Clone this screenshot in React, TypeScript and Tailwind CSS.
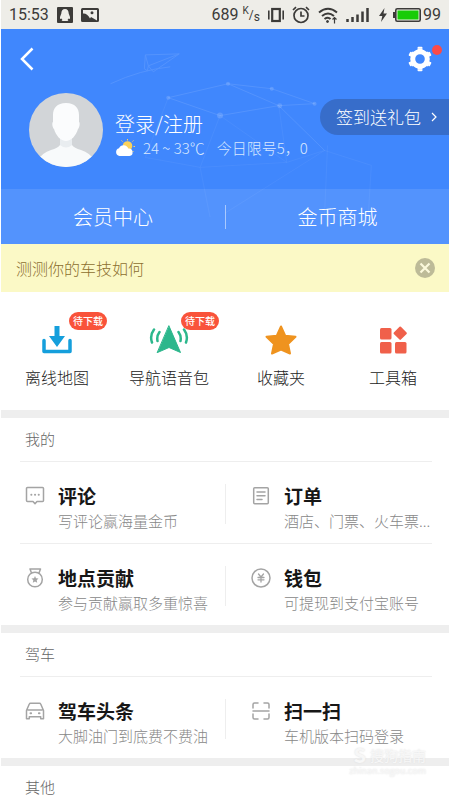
import React from 'react';

const stroke = {
  fill: 'none',
  stroke: 'currentColor',
  strokeWidth: 1.5,
  strokeLinecap: 'round',
  strokeLinejoin: 'round',
} as const;

const CommentIcon = () => (
  <svg viewBox="0 0 20 20" className="w-5 h-5" {...stroke}>
    <path d="M2.500 1.500h15a1 1 0 0 1 1 1v12a1 1 0 0 1-1 1H12l-2 2.300-2-2.300H2.500a1 1 0 0 1-1-1v-12a1 1 0 0 1 1-1z" />
    <path d="M6.300 8.800h.1M10 8.800h.1M13.700 8.800h.1" strokeWidth="2" />
  </svg>
);

const OrderIcon = () => (
  <svg viewBox="0 0 20 20" className="w-5 h-5" {...stroke}>
    <rect x="2.700" y="1.800" width="14.600" height="16" rx="1" />
    <path d="M6 6h8M6 9.700h8M6 13.500h5" />
  </svg>
);

const MedalIcon = () => (
  <svg viewBox="0 0 20 20" className="w-5 h-5" {...stroke}>
    <circle cx="10" cy="11.500" r="7.300" />
    <path d="M6.500 5 5 1h10.500L14 5" />
    <path d="m10 8 1 2.300 2.500.3-1.800 1.700.5 2.500-2.200-1.300-2.200 1.300.5-2.500-1.800-1.700 2.500-.3z" fill="currentColor" strokeWidth="0" />
  </svg>
);

const WalletIcon = () => (
  <svg viewBox="0 0 20 20" className="w-5 h-5" {...stroke}>
    <circle cx="10" cy="10" r="9" />
    <path d="m7.500 6 2.500 3 2.500-3M10 9v5M7 9.500h6M7 11.800h6" strokeWidth="1.300" />
  </svg>
);

const CarIcon = () => (
  <svg viewBox="0 0 20 20" className="w-5 h-5" {...stroke}>
    <path d="M1.500 9.500 4.300 3q.3-.8 1.200-.8h9q.9 0 1.200.8l2.800 6.500v8.300h-2.800v-2H4.300v2H1.500zM3 9h14" />
    <path d="M5.500 12.300h.6M13.900 12.300h.6" strokeWidth="2" />
  </svg>
);

const ScanIcon = () => (
  <svg viewBox="0 0 20 20" className="w-5 h-5" {...stroke}>
    <path d="M2 7V3.500A1.500 1.500 0 0 1 3.500 2H7M13 2h3.500A1.500 1.500 0 0 1 18 3.500V7M18 13v3.500a1.500 1.500 0 0 1-1.500 1.500H13M7 18H3.500A1.500 1.500 0 0 1 2 16.500V13M2 10h16" />
  </svg>
);

const DownloadIcon = () => (
  <svg viewBox="0 0 32 32" className="w-8 h-8" fill="#159fdc">
    <path d="M13.500 2h5v10h5.500l-8 11-8-11h5.500z" />
    <path d="M3 16.500v11h26v-11" fill="none" stroke="#159fdc" strokeWidth="3.500" strokeLinecap="round" strokeLinejoin="round" />
  </svg>
);

const VoiceIcon = () => (
  <svg viewBox="0 0 40 32" className="w-10 h-8" fill="none" stroke="#2cb78c" strokeLinecap="round">
    <path d="M20 2 31.500 28.500 20 23.500l-11.500 5z" fill="#2cb78c" strokeWidth="1" strokeLinejoin="round" />
    <path d="M10.500 8q-3 4-2 9M5 5.500q-4.500 6-2 13M29.500 8q3 4 2 9M35 5.500q4.500 6 2 13" strokeWidth="2.500" />
  </svg>
);

const StarIcon = () => (
  <svg viewBox="0 0 32 32" className="w-8 h-8" fill="#ef931f" stroke="#ef931f" strokeWidth="2" strokeLinejoin="round">
    <path d="m16 2.500 4.300 9.300 10.200 1-7.500 7.200 2 9.500-9-4-9 4 2-9.500-7.500-7.200 10.200-1z" />
  </svg>
);

const ToolsIcon = () => (
  <svg viewBox="0 0 32 32" className="w-8 h-8" fill="#f0604a">
    <rect x="3" y="4" width="11.500" height="11.500" rx="1.500" />
    <rect x="3" y="18" width="11.500" height="11.500" rx="1.500" />
    <rect x="18" y="18" width="11.500" height="11.500" rx="1.500" />
    <rect x="18.200" y="4.200" width="10" height="10" rx="1" transform="rotate(45 23.200 9.200)" />
  </svg>
);

const GearIcon = () => (
  <svg viewBox="0 0 28 28" className="w-7 h-7" fill="none" stroke="currentColor">
    <circle cx="14" cy="14" r="7.300" strokeWidth="5" />
    <path
      d="M14 6V3.500M14 22v2.500M7.100 10 4.900 8.800M20.900 18l2.200 1.200M7.100 18l-2.200 1.200M20.900 10l2.200-1.200"
      strokeWidth="5"
    />
    <path d="M12.500 2.800h3M12.500 25.200h3M3.700 10l1.200-2.200M24.300 10l-1.200-2.200M3.700 18l1.200 2.200M24.300 18l-1.200 2.200" strokeWidth="2" strokeLinecap="round" />
  </svg>
);

interface Shortcut {
  label: string;
  icon: React.FC;
  badge?: string;
}

interface Entry {
  title: string;
  desc: string;
  icon: React.FC;
}

const shortcuts: Shortcut[] = [
  { label: '离线地图', icon: DownloadIcon, badge: '待下载' },
  { label: '导航语音包', icon: VoiceIcon, badge: '待下载' },
  { label: '收藏夹', icon: StarIcon },
  { label: '工具箱', icon: ToolsIcon },
];

const mine: Entry[][] = [
  [
    { title: '评论', desc: '写评论赢海量金币', icon: CommentIcon },
    { title: '订单', desc: '酒店、门票、火车票...', icon: OrderIcon },
  ],
  [
    { title: '地点贡献', desc: '参与贡献赢取多重惊喜', icon: MedalIcon },
    { title: '钱包', desc: '可提现到支付宝账号', icon: WalletIcon },
  ],
];

const driving: Entry[][] = [
  [
    { title: '驾车头条', desc: '大脚油门到底费不费油', icon: CarIcon },
    { title: '扫一扫', desc: '车机版本扫码登录', icon: ScanIcon },
  ],
];

const StatusBar = () => (
  <div className="h-[29px] bg-[#eeede8] flex items-center px-2 text-[#3c3b39] font-[Roboto] font-normal text-base">
    <span>15:53</span>
    <svg viewBox="0 0 16 16" className="w-4 h-4 ml-2" fill="currentColor">
      <path fillRule="evenodd" d="M1 0h14a1 1 0 0 1 1 1v14a1 1 0 0 1-1 1H1a1 1 0 0 1-1-1V1a1 1 0 0 1 1-1zm7 2C5.500 2 4.300 4 4.300 6.500L3 10v2l1.300-.5L5.500 13 4.500 14h7l-1-1 1.200-1.500L13 12v-2l-1.300-3.500C11.700 4 10.500 2 8 2z" />
    </svg>
    <svg viewBox="0 0 18 16" className="w-[18px] h-4 ml-2" fill="currentColor">
      <path fillRule="evenodd" d="M1.500 1h15A1.500 1.500 0 0 1 18 2.500v11a1.500 1.500 0 0 1-1.500 1.500h-15A1.500 1.500 0 0 1 0 13.500v-11A1.500 1.500 0 0 1 1.500 1zM2 3v3.500q4-.5 7 5l1-1.500 6 3.500V3zm9 1.200a1.500 1.500 0 1 1 0 3 1.500 1.500 0 0 1 0-3z" />
    </svg>
    <span className="ml-auto">689</span>
    <span className="flex items-center ml-1 text-[10px] leading-none">
      <span className="pb-2">K</span>
      <span className="text-xs leading-none">/</span>
      <span className="pt-1 text-xs leading-none">s</span>
    </span>
    <svg viewBox="0 0 16 16" className="w-4 h-4 ml-2" fill="none" stroke="currentColor">
      <rect x="4.200" y="2" width="7.600" height="12" strokeWidth="2.200" />
      <path d="M.8 3.500v9M15.200 3.500v9" strokeWidth="1.600" />
    </svg>
    <svg viewBox="0 0 18 18" className="w-[18px] h-[18px] ml-2" fill="none" stroke="currentColor" strokeWidth="1.700">
      <circle cx="9" cy="9.500" r="7" />
      <path d="M9 5.500v4.500h3.500M1 4l3-2.800M17 4l-3-2.800" />
    </svg>
    <svg viewBox="0 0 20 18" className="w-5 h-[18px] ml-2" fill="none" stroke="currentColor" strokeWidth="2">
      <path d="M1 6.500q9-7.500 18 0M4 10q6-5 12 0M6.500 13q3.500-2.500 6 0" />
      <circle cx="9.500" cy="15.500" r="1" fill="currentColor" strokeWidth="1" />
      <path d="M16.500 11.500v6M14.500 13.500l2-2 2 2" strokeWidth="1.200" />
    </svg>
    <svg viewBox="0 0 23 16" className="w-[23px] h-4 ml-2" stroke="currentColor" strokeWidth="2.500">
      <path d="M1.500 15v-3M6.500 15v-5M11.500 15V7.500M16.500 15V4.500M21.500 15V1" />
    </svg>
    <svg viewBox="0 0 8 14" className="w-2 h-3.5 ml-2.5" fill="currentColor">
      <path d="M5.500 0 0 8h3.300L2 14l6-8.500H4.500z" />
    </svg>
    <svg viewBox="0 0 28 14" className="w-7 h-3.5 ml-1.5 mr-0.5">
      <rect x="2.800" y=".8" width="24.400" height="12.400" rx="1.500" fill="#eeede8" stroke="#3c3b39" strokeWidth="1.600" />
      <rect x="0" y="4" width="2.500" height="6" fill="#3c3b39" />
      <rect x="4.500" y="2.500" width="21" height="9" fill="#18cc08" />
    </svg>
    <span>99</span>
  </div>
);

const Constellation = () => (
  <svg viewBox="0 0 450 215" className="absolute top-0 left-0 w-full" fill="none" stroke="#ffffff" aria-hidden="true">
    <g opacity=".1">
      <path d="m145 26 34-1-26 18-5-6zM179 25l-31 12-1 5-3-2 1-14M110 55q30-14 60-17" />
      <path d="m168 69 60-14 44 5 43 15-36 2-51-22M168 69l52 18 59-10 46 45" />
    </g>
    <g opacity=".05">
      <path d="m279 77 8 57 38-12 47 15-3 49-44 1 3-70M168 69l-23 60 55 10 20-52 67 47-87 5 10 50M325 122l-100 63" />
    </g>
    <g fill="#ffffff" stroke="none" opacity=".15">
      <circle cx="168" cy="69" r="2" />
      <circle cx="220" cy="87" r="3" />
      <circle cx="228" cy="55" r="2" />
      <circle cx="272" cy="60" r="2" />
      <circle cx="280" cy="77" r="2.500" />
      <circle cx="315" cy="75" r="2" />
    </g>
  </svg>
);

const Header = () => (
  <header className="relative bg-[#4087fd] text-white">
    <Constellation />
    <div className="relative flex items-center justify-between h-[60px] px-[15px]">
      <button aria-label="返回" className="p-1">
        <svg viewBox="0 0 14 24" className="w-3.5 h-6" fill="none" stroke="currentColor" strokeWidth="2.500">
          <path d="M12.500 1.500 2 12l10.500 10.500" />
        </svg>
      </button>
      <button aria-label="设置" className="relative">
        <GearIcon />
        <span className="absolute top-0 -right-2 w-2.5 h-2.5 rounded-full bg-[#fb4a48]"></span>
      </button>
    </div>
    <div className="relative flex items-center h-[100px] pl-7 pb-1.5">
      <svg viewBox="0 0 74 74" className="w-[74px] h-[74px] mb-3 shrink-0">
        <defs>
          <clipPath id="avatar"><circle cx="37" cy="37" r="37" /></clipPath>
        </defs>
        <g clipPath="url(#avatar)">
          <rect width="74" height="74" fill="#d2d5d8" />
          <path d="M31 42h12v10q2 3 9 5 9 3 13 10v7H9v-7q4-7 13-10 7-2 9-5z" fill="#f8fafb" />
          <path d="M31 44q6 6 12 0v8q-6 5-12 0z" fill="#e9edf0" />
          <path d="M37 10c9 0 13 5 13 12v7c1 0 1 5-1 7-2 7-7 12-12 12s-10-5-12-12c-2-2-2-7-1-7v-7c0-7 4-12 13-12z" fill="#fbfcfd" />
        </g>
      </svg>
      <div className="ml-3 mb-1">
        <a href="#login" className="block text-xl leading-7">登录/注册</a>
        <div className="flex items-center text-[15px] leading-5 text-[#d9e7ff]">
          <svg viewBox="0 0 20 18" className="w-5 h-[18px] mr-2">
            <circle cx="12.500" cy="7" r="4.800" fill="#fbd25c" />
            <path d="M12.500 1.500V0M17.500 2.500l1-1M18.500 7.500H20M17.500 12l1 1M7.500 2.500l-1-1" stroke="#fbd25c" />
            <path d="M4.500 17a4 4 0 0 1-.5-7.800 5 5 0 0 1 9.300.3A3.800 3.800 0 0 1 14.500 17z" fill="#ffffff" />
          </svg>
          <span>24 ~ 33℃</span>
          <span className="ml-3">今日限号5，0</span>
        </div>
      </div>
    </div>
    <button className="absolute top-[70px] right-0 h-9 pl-4 pr-3 rounded-l-full bg-[#376dca] flex items-center text-[17px]">
      签到送礼包
      <svg viewBox="0 0 6 10" className="w-1.5 h-2.5 ml-2.5" fill="none" stroke="currentColor" strokeWidth="1.200">
        <path d="m1 1 4 4-4 4" />
      </svg>
    </button>
    <nav className="relative grid grid-cols-2 h-[55px] items-center bg-white/10 text-xl text-center">
      <a href="#member">会员中心</a>
      <a href="#coins" className="border-l border-white/50 leading-6">金币商城</a>
    </nav>
  </header>
);

const Section: React.FC<{ title: string; rows?: Entry[][] }> = ({ title, rows = [] }) => (
  <section className="border-t-8 border-[#eeeeee]">
    <h2 className="pl-6 h-[43px] flex items-center text-[15px] text-[#666666]">{title}</h2>
    {rows.map((row) => (
      <div key={row[0].title} className="ml-[19px] mr-[17px] h-[82px] pt-[22px] border-t border-[#eeeeee] grid grid-cols-[205px_1fr] items-start">
        {row.map(({ title: name, desc, icon: Icon }, i) => (
          <a
            key={name}
            href={`#${name}`}
            className={i ? 'flex h-10 border-l border-[#eeeeee] pl-[25px]' : 'flex h-10 pl-[5px]'}
          >
            <span className="text-[#a4a4a4] shrink-0 pt-0.5">
              <Icon />
            </span>
            <span className="ml-[13px] whitespace-nowrap">
              <span className="block text-[19px] leading-6 font-bold text-[#171717]">{name}</span>
              <span className="block text-[15px] leading-[26px] font-light text-[#888888]">{desc}</span>
            </span>
          </a>
        ))}
      </div>
    ))}
  </section>
);

const App: React.FC = () => {
  return (
    <div className="relative px-px bg-white font-['Noto_Sans_CJK_SC',sans-serif] font-light">
      <StatusBar />
      <Header />
      <div className="flex items-center justify-between h-12 pl-[15px] pr-3.5 bg-[#fbf9c6] text-base text-[#8c6f2f]">
        <a href="#test">测测你的车技如何</a>
        <button aria-label="关闭">
          <svg viewBox="0 0 20 20" className="w-5 h-5">
            <circle cx="10" cy="10" r="10" fill="#bdbb98" />
            <path d="m5.500 5.500 9 9M14.500 5.500l-9 9" stroke="#fbf9dc" strokeWidth="2.200" />
          </svg>
        </button>
      </div>
      <div className="grid grid-cols-4 h-[118px] pt-8">
        {shortcuts.map(({ label, icon: Icon, badge }) => (
          <button key={label} className="relative flex flex-col items-center text-base text-[#222222]">
            <Icon />
            <span className="mt-[9px] leading-6">{label}</span>
            {badge && (
              <span className="absolute -top-3 left-1/2 ml-3 px-1 h-[18px] leading-[18px] rounded-full bg-[#f9533a] text-white text-[10px] font-medium">
                {badge}
              </span>
            )}
          </button>
        ))}
      </div>
      <Section title="我的" rows={mine} />
      <Section title="驾车" rows={driving} />
      <Section title="其他" />
      <div className="absolute right-6 bottom-8 flex flex-col items-end font-bold text-[#f7f7f7] text-shadow-[0_0_2px_#dddddd]">
        <div className="flex items-center gap-1 text-sm leading-5">
          <span className="text-xl leading-5">S</span>
          <span className="font-normal">搜狗指南</span>
        </div>
        <div className="text-[9px] leading-3 font-normal">zhinan.sogou.com</div>
      </div>
    </div>
  );
};

export default App;
